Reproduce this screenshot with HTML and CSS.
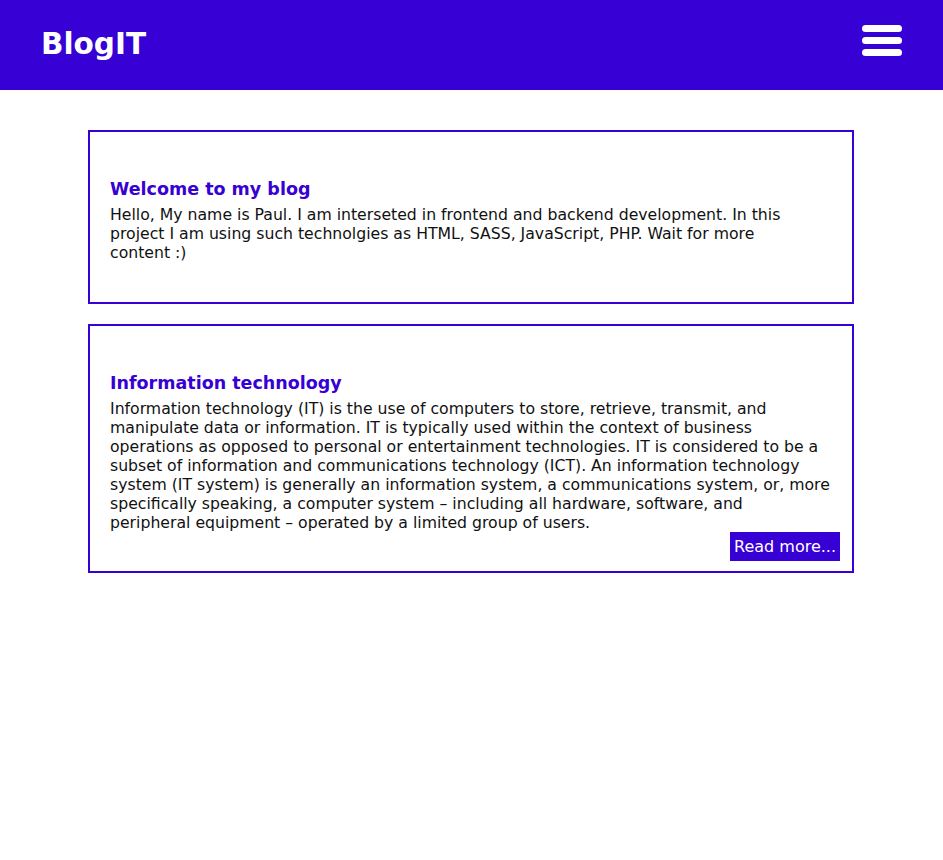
FILE: index.html
```html
<!DOCTYPE html>
<html lang="en">
<head>
<meta charset="utf-8">
<title>BlogIT</title>
<link rel="stylesheet" href="styles.css">
</head>
<body>
<header class="topbar">
  <a class="logo" href="#">BlogIT</a>
  <button class="burger" aria-label="Menu">
    <span></span><span></span><span></span>
  </button>
</header>
<main class="posts">
  <article class="post">
    <h2 class="post-title">Welcome to my blog</h2>
    <p class="post-text">Hello, My name is Paul. I am interseted in frontend and backend development. In this<br>
project I am using such technolgies as HTML, SASS, JavaScript, PHP. Wait for more<br>
content :)</p>
  </article>
  <article class="post">
    <h2 class="post-title">Information technology</h2>
    <p class="post-text">Information technology (IT) is the use of computers to store, retrieve, transmit, and<br>
manipulate data or information. IT is typically used within the context of business<br>
operations as opposed to personal or entertainment technologies. IT is considered to be a<br>
subset of information and communications technology (ICT). An information technology<br>
system (IT system) is generally an information system, a communications system, or, more<br>
specifically speaking, a computer system – including all hardware, software, and<br>
peripheral equipment – operated by a limited group of users.</p>
    <div class="post-actions"><a class="read-more" href="#">Read more...</a></div>
  </article>
</main>
</body>
</html>
```
FILE: styles.css
```css
* { box-sizing: border-box; }
body {
  margin: 0;
  font-family: "DejaVu Sans", sans-serif;
  color: #111;
  background: #fff;
}
.topbar {
  height: 90px;
  background: #3700d4;
  display: flex;
  align-items: center;
  justify-content: space-between;
  padding: 0 41px 0 41px;
}
.logo {
  color: #fff;
  text-decoration: none;
  font-weight: bold;
  font-size: 29.5px;
  margin-bottom: 2px;
}
.burger {
  background: none;
  border: 0;
  padding: 0;
  width: 40px;
  margin-bottom: 10px;
  display: flex;
  flex-direction: column;
  gap: 5px;
  cursor: pointer;
}
.burger span {
  display: block;
  height: 7px;
  border-radius: 3.5px;
  background: #fff;
}
.posts {
  margin: 40px 89px 0 88px;
  display: flex;
  flex-direction: column;
  gap: 20px;
}
.post {
  border: 2px solid #3700d4;
  padding: 45px 12px 10px 20px;
}
.post-title {
  margin: 0;
  color: #3700d4;
  font-size: 17.5px;
  font-weight: 600;
  line-height: 24px;
}
.post-text {
  margin: 4px 0 0;
  font-size: 15.7px;
  letter-spacing: 0;
  line-height: 19px;
  white-space: nowrap;
}
.post:first-child .post-text { margin-bottom: 30px; }
.post-actions {
  display: flex;
  justify-content: flex-end;
}
.read-more {
  background: #3700d4;
  color: #fff;
  text-decoration: none;
  font-size: 16px;
  line-height: 29px;
  padding: 0 4px;
}
```
